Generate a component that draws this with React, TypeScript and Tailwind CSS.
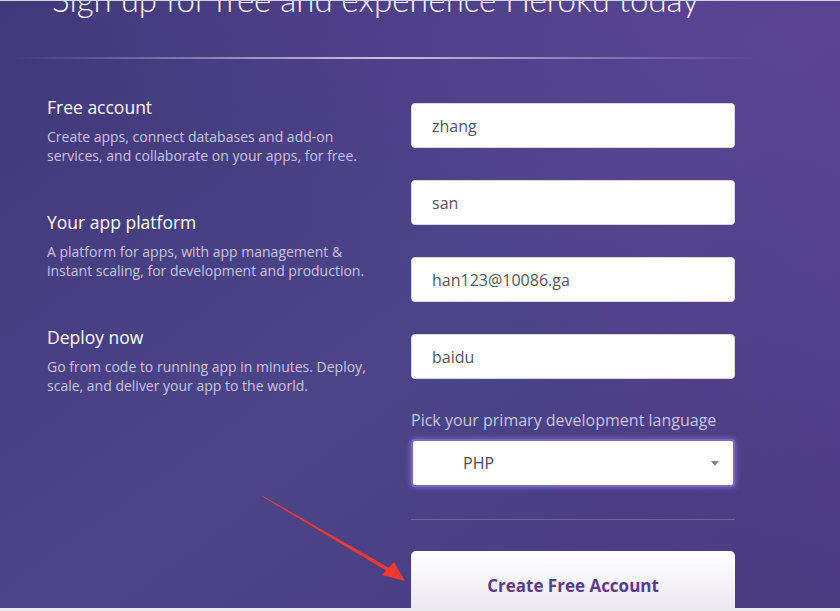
import React from "react";

const features = [
  {
    title: "Free account",
    body: "Create apps, connect databases and add-on services, and collaborate on your apps, for free.",
  },
  {
    title: "Your app platform",
    body: "A platform for apps, with app management & instant scaling, for development and production.",
  },
  {
    title: "Deploy now",
    body: "Go from code to running app in minutes. Deploy, scale, and deliver your app to the world.",
  },
];

const fields = ["zhang", "san", "han123@10086.ga", "baidu"];

const App: React.FC = () => {
  return (
    <div className="relative h-[611px] w-[840px] overflow-hidden border-t border-[#d4d4d8] bg-gradient-to-br from-[#41387a] via-[#4c4489] to-[#4a3a80] font-['Open_Sans',sans-serif]">
      <div className="pointer-events-none absolute inset-0 bg-gradient-to-bl from-[#60459a]/70 via-transparent to-transparent" />
      <div className="relative ml-[15px] w-[742px]">
        <h1 className="-mt-[22px] pl-[37px] font-['Lato',sans-serif] text-[33px] font-light leading-[40px] text-white">
          Sign up for free and experience Heroku today
        </h1>
        <div className="mt-[38px] h-[2px] bg-gradient-to-r from-transparent via-[#c9c2e0] to-transparent" />

        <div className="mt-[36px] flex">
          <div className="w-[396px] pl-[32px] pr-[34px]">
            {features.map((f) => (
              <div key={f.title} className="mb-[53px] h-[62px]">
                <h3 className="text-[17.5px] leading-[24px] text-white">{f.title}</h3>
                <p className="mt-[8px] text-[14px] leading-[19px] text-[#cac3e0]">{f.body}</p>
              </div>
            ))}
          </div>

          <div className="w-[324px] pt-[8px]">
            {fields.map((v) => (
              <input
                key={v}
                readOnly
                value={v}
                className="mb-[32px] block h-[45px] w-full rounded-[4px] border border-[#d8d8de] bg-white px-[20px] text-[16px] text-[#55555f] outline-none"
              />
            ))}
            <label className="-mt-[3px] block text-[16px] leading-[24px] text-[#cac3e0]">
              Pick your primary development language
            </label>
            <div className="mt-[7px] flex h-[48px] items-center justify-between rounded-[4px] border-2 border-[#7867c4] bg-white pl-[50px] pr-[14px] shadow-[0_0_6px_rgba(150,130,230,0.7)]">
              <span className="text-[16px] text-[#4a4a55]">PHP</span>
              <span className="h-0 w-0 border-x-[4px] border-t-[5px] border-x-transparent border-t-[#888]" />
            </div>
            <div className="mt-[32px] h-px bg-white/20" />
            <button className="mt-[31px] h-[70px] w-full rounded-t-[5px] bg-gradient-to-b from-white to-[#e7e4ee] text-[17px] font-bold text-[#5b3a8e]">
              Create Free Account
            </button>
          </div>
        </div>
      </div>

      <div className="absolute bottom-0 left-0 h-[3px] w-full bg-[#ecebf0]" />

      <svg className="absolute left-0 top-0" width="840" height="611">
        <polygon points="262,494.5 391,568 389.5,571.5 262,495.5" fill="#f03a30" />
        <polygon points="405,580 382,574 394,561" fill="#f03a30" />
      </svg>
    </div>
  );
};

export default App;
